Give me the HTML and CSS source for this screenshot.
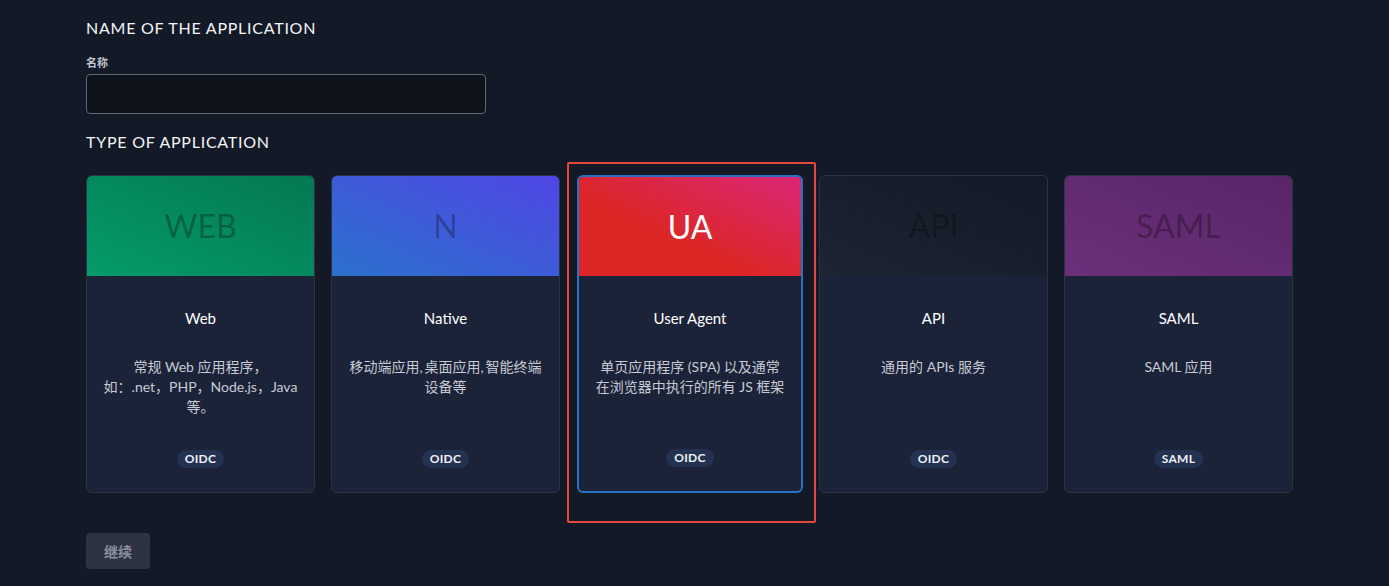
FILE: index.html
```html
<!DOCTYPE html>
<html lang="zh-CN">
<head>
<meta charset="utf-8">
<title>Create application</title>
<link rel="stylesheet" href="styles.css">
</head>
<body>
<main class="page">
  <h1 class="section-title">NAME OF THE APPLICATION</h1>
  <label class="field-label" for="app-name">名称</label>
  <input class="text-input" id="app-name" type="text">

  <h2 class="section-title type-title">TYPE OF APPLICATION</h2>

  <div class="cards">
    <div class="card">
      <div class="card-head head-web"><span class="head-text">WEB</span></div>
      <div class="card-body">
        <div class="card-title">Web</div>
        <div class="card-desc">常规 Web 应用程序，<br>如：.net，PHP，Node.js，Java<br>等。</div>
        <span class="badge">OIDC</span>
      </div>
    </div>
    <div class="card">
      <div class="card-head head-native"><span class="head-text">N</span></div>
      <div class="card-body">
        <div class="card-title">Native</div>
        <div class="card-desc">移动端应用,&thinsp;桌面应用,&thinsp;智能终端<br>设备等</div>
        <span class="badge">OIDC</span>
      </div>
    </div>
    <div class="card selected">
      <div class="card-head head-ua"><span class="head-text">UA</span></div>
      <div class="card-body">
        <div class="card-title">User Agent</div>
        <div class="card-desc">单页应用程序 (SPA) 以及通常<br>在浏览器中执行的所有 JS 框架</div>
        <span class="badge">OIDC</span>
      </div>
      <div class="highlight"></div>
    </div>
    <div class="card">
      <div class="card-head head-api"><span class="head-text">API</span></div>
      <div class="card-body">
        <div class="card-title">API</div>
        <div class="card-desc">通用的 APIs 服务</div>
        <span class="badge">OIDC</span>
      </div>
    </div>
    <div class="card">
      <div class="card-head head-saml"><span class="head-text">SAML</span></div>
      <div class="card-body">
        <div class="card-title">SAML</div>
        <div class="card-desc">SAML 应用</div>
        <span class="badge">SAML</span>
      </div>
    </div>
  </div>

  <button class="btn-continue" type="button">继续</button>
</main>
</body>
</html>
```

FILE: styles.css
```css
* { box-sizing: border-box; }

html, body {
  margin: 0;
  background: #131927;
  height: 100%;
}

body {
  font-family: Lato, "Noto Sans CJK SC", sans-serif;
  color: #ffffff;
  overflow: hidden;
}

.page {
  padding: 16px 0 0 86px;
  display: flex;
  flex-direction: column;
  align-items: flex-start;
}

.section-title {
  margin: 0;
  font-size: 16px;
  line-height: 24px;
  font-weight: 400;
  color: #f4f5f7;
  letter-spacing: 0.75px;
}

.field-label {
  margin-top: 15px;
  font-size: 11px;
  line-height: 16px;
  font-weight: 700;
  color: #c3c6cd;
}

.text-input {
  margin-top: 3px;
  width: 400px;
  height: 40px;
  background: #0e121b;
  border: 1px solid #62666f;
  border-radius: 4px;
  outline: none;
  color: #fff;
}

.type-title {
  margin-top: 16px;
}

.cards {
  margin-top: 21px;
  display: flex;
  gap: 16px;
}

.card {
  position: relative;
  width: 229px;
  height: 318px;
  flex: none;
  border: 1px solid #2b3345;
  border-radius: 6px;
  background: #1b2339;
  display: flex;
  flex-direction: column;
}

.card.selected {
  width: 226px;
  margin-left: 1px;
  border: 2px solid #2872c4;
}

.card-head {
  height: 100px;
  border-radius: 5px 5px 0 0;
  display: flex;
  align-items: center;
  justify-content: center;
  flex: none;
}

.selected .card-head {
  height: 99px;
  border-radius: 4px 4px 0 0;
}

.head-text {
  font-size: 32px;
  line-height: 40px;
  color: rgba(0, 0, 0, 0.3);
}

.head-web { background: linear-gradient(to top right, #059b69, #047853); }
.head-native { background: linear-gradient(to top right, #2b71cc, #5046e5); }
.head-ua { background: linear-gradient(to top right, #dc2626 40%, #db2777); }
.head-ua .head-text { color: #ffffff; }
.head-api { background: linear-gradient(to top right, #1d2532, #131926); }
.head-saml { background: linear-gradient(to top right, #6b3079, #5a2568); }

.card-body {
  flex: 1;
  display: flex;
  flex-direction: column;
  align-items: center;
  padding: 32px 10px 24px;
  text-align: center;
}

.card-title {
  font-size: 15px;
  line-height: 20px;
  color: #ffffff;
}

.card-desc {
  margin-top: 29px;
  font-size: 14px;
  line-height: 20px;
  color: #c7cad2;
  white-space: nowrap;
}

.badge {
  margin-top: auto;
  height: 18px;
  padding: 0 8px;
  border-radius: 9px;
  background: #243252;
  font-size: 12px;
  line-height: 18px;
  font-weight: 700;
  color: #eef0f4;
  letter-spacing: 0.3px;
}

.highlight {
  position: absolute;
  left: -12px;
  top: -15px;
  right: -15px;
  bottom: -32px;
  border: 2px solid #e5483c;
  border-radius: 2px;
  pointer-events: none;
}

.btn-continue {
  margin-top: 40px;
  width: 64px;
  height: 36px;
  border: none;
  border-radius: 4px;
  background: #2e3343;
  color: #8c919d;
  font-family: Lato, "Noto Sans CJK SC", sans-serif;
  font-size: 14px;
  font-weight: 700;
}
```
